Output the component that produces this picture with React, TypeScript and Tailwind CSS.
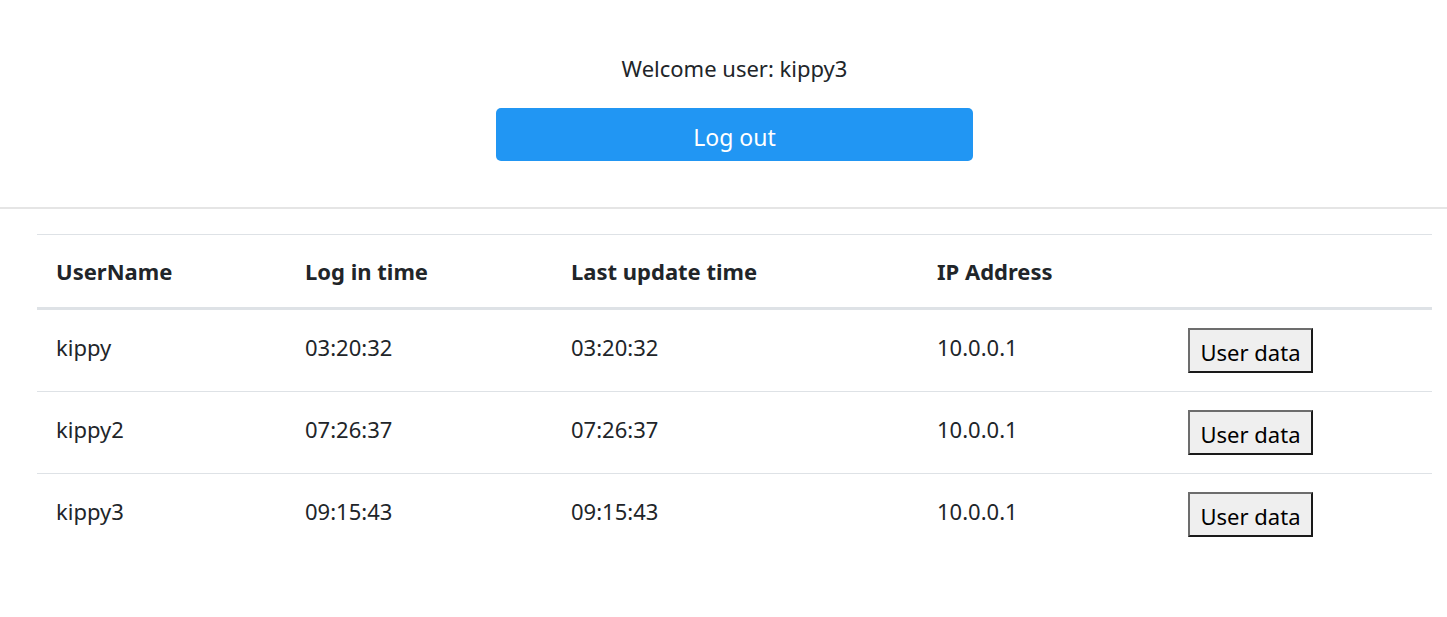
import React from 'react';

const users = [
  { name: 'kippy', login: '03:20:32', update: '03:20:32', ip: '10.0.0.1' },
  { name: 'kippy2', login: '07:26:37', update: '07:26:37', ip: '10.0.0.1' },
  { name: 'kippy3', login: '09:15:43', update: '09:15:43', ip: '10.0.0.1' },
];

const cols = 'grid grid-cols-[249px_266px_366px_251px_263px]';

export default function App() {
  return (
    <div
      className="min-h-[617px] bg-white text-[#212529]"
      style={{ fontFamily: '"Noto Sans", "Open Sans", sans-serif' }}
    >
      {/* Header */}
      <div className="flex flex-col items-center pl-[22px] pt-[51px] pb-[46px] border-b-2 border-[#e5e5e5]">
        <p className="text-[22px] leading-[34px]">Welcome user: kippy3</p>
        <button className="mt-[23px] w-[477px] h-[53px] pt-[5px] rounded-[5px] bg-[#2196f3] text-white text-[23px]">
          Log out
        </button>
      </div>

      {/* Table */}
      <div className="ml-[37px] w-[1395px] mt-[25px] border-t border-[#dee2e6] text-[22px]">
        <div className={`${cols} h-[75px] border-b-[3px] border-[#dee2e6] font-bold`}>
          {['UserName', 'Log in time', 'Last update time', 'IP Address', ''].map((h, i) => (
            <div key={i} className="pl-[19px] pt-[20px] leading-[32px]">
              {h}
            </div>
          ))}
        </div>
        {users.map((u, i) => (
          <div
            key={u.name}
            className={`${cols} h-[82px] ${i < users.length - 1 ? 'border-b border-[#dee2e6]' : ''}`}
          >
            <div className="pl-[19px] pt-[21px] leading-[32px]">{u.name}</div>
            <div className="pl-[19px] pt-[21px] leading-[32px]">{u.login}</div>
            <div className="pl-[19px] pt-[21px] leading-[32px]">{u.update}</div>
            <div className="pl-[19px] pt-[21px] leading-[32px]">{u.ip}</div>
            <div className="pl-[19px] pt-[18px]">
              <button className="w-[125px] h-[45px] pt-[3px] bg-[#efefef] text-[22px] text-black border-[2px] border-t-[#6d6d6d] border-l-[#6d6d6d] border-r-[#1a1a1a] border-b-[#1a1a1a]">
                User data
              </button>
            </div>
          </div>
        ))}
      </div>
    </div>
  );
}
